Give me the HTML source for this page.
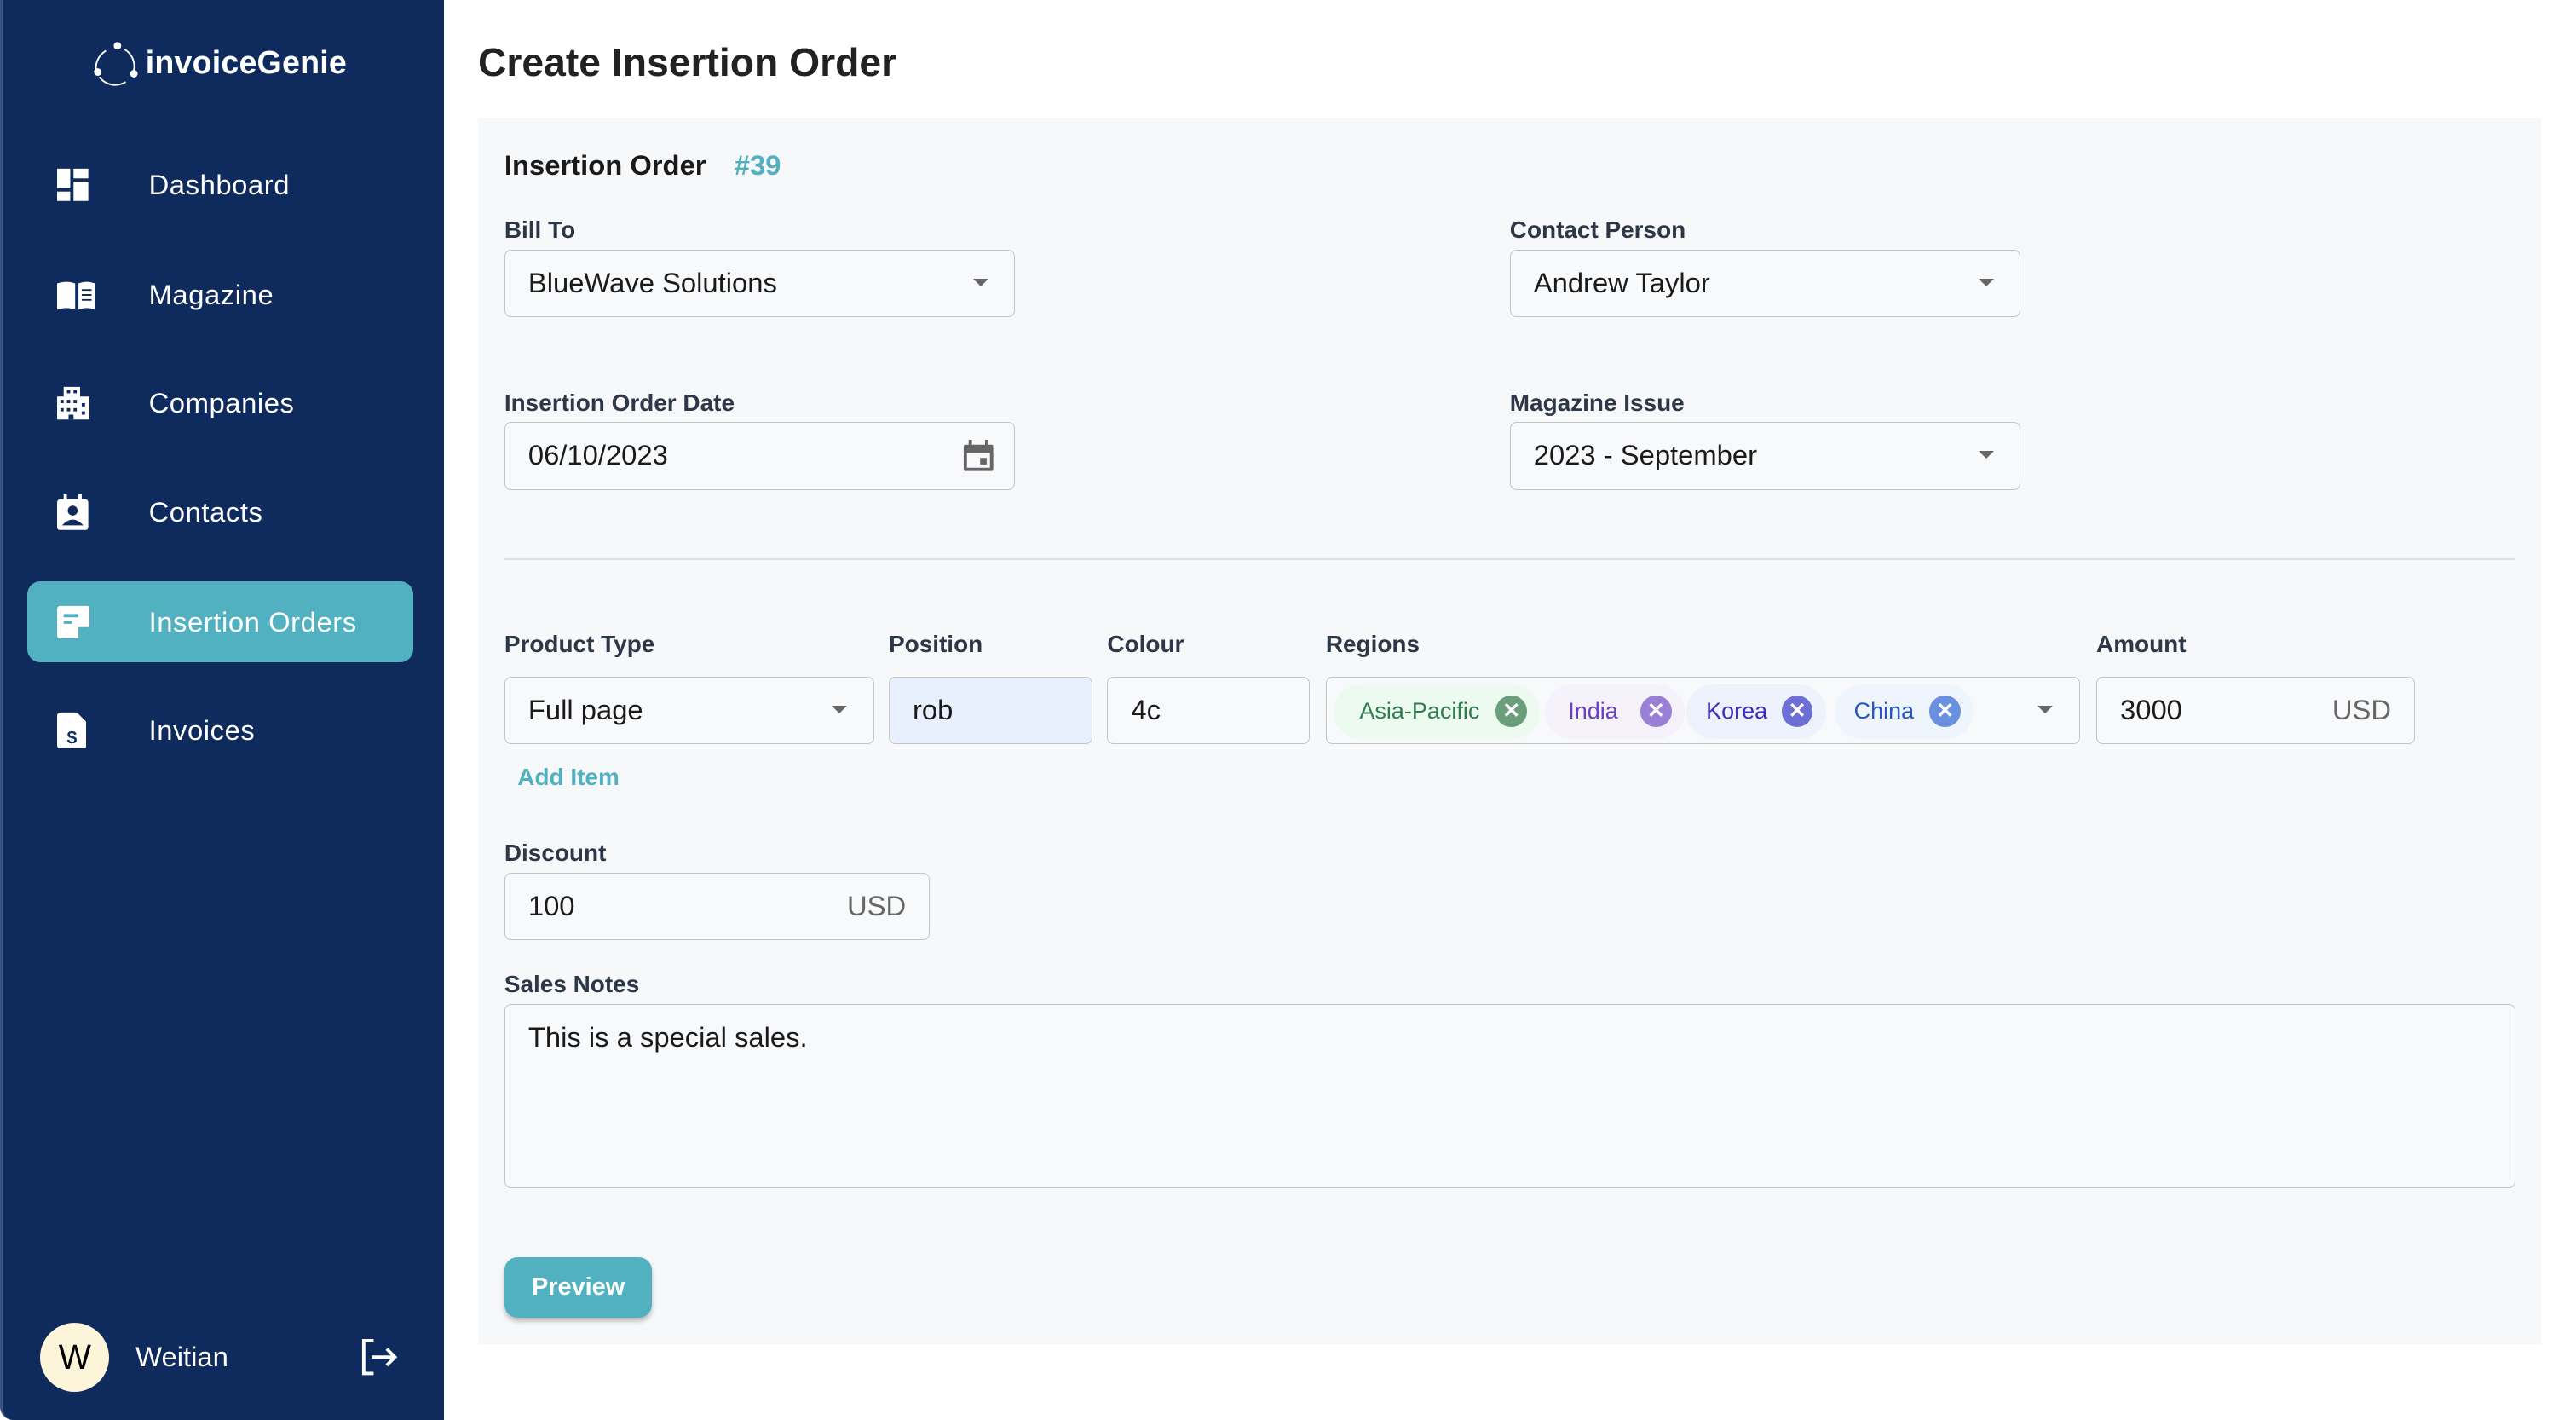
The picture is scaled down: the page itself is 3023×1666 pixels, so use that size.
<!DOCTYPE html>
<html><head><meta charset="utf-8"><style>
html,body{margin:0;padding:0;}
body{width:1568px;height:864px;zoom:1.92793;overflow:hidden;font-family:"Liberation Sans",sans-serif;background:#fff;position:relative;}
.abs{position:absolute;}
.side{left:0;top:0;width:270px;height:864px;background:#0f2a5c;border-left:2px solid #3a5280;box-sizing:border-box;border-radius:0 0 0 8px;}
.nav{position:absolute;left:15px;width:235px;height:49px;border-radius:8px;color:#fff;font-size:17px;}
.nav span{position:absolute;left:74px;top:50%;transform:translateY(-50%);letter-spacing:.3px;}
.nav svg{position:absolute;left:18px;top:50%;transform:translateY(-50%);}
.lbl{position:absolute;font-size:14.5px;font-weight:bold;color:#2d3748;}
.inp{position:absolute;height:41px;border:1px solid #c4c4c4;border-radius:4px;box-sizing:border-box;background:#f8f9fb;font-size:17px;color:#1a1a1a;line-height:39px;padding-left:14px;}
.arr{position:absolute;right:16px;top:17px;width:0;height:0;border-left:5px solid transparent;border-right:5px solid transparent;border-top:5px solid #666;}
.chip{position:absolute;top:4px;height:33px;border-radius:17px;font-size:14px;line-height:33px;padding-left:16px;box-sizing:border-box;}
.chip i{position:absolute;right:8px;top:7px;width:19px;height:19px;border-radius:50%;color:#fff;font-style:normal;font-size:13px;font-weight:bold;line-height:19px;text-align:center;}
.usd{position:absolute;right:14px;top:0;color:#666;}
</style></head><body>
<div class="abs side">
  <svg class="abs" style="left:54px;top:24px" width="30" height="30" viewBox="0 0 30 30"><path d="M9 7 A12 12 0 0 0 3 19" fill="none" stroke="#fff" stroke-width="1"/><path d="M20 6 A12 12 0 0 1 26 19" fill="none" stroke="#fff" stroke-width="1"/><path d="M5 23 A12 12 0 0 0 21 26" fill="none" stroke="#fff" stroke-width="1"/><circle cx="16" cy="4" r="2.3" fill="#fff"/><circle cx="4" cy="20" r="2.3" fill="#fff"/><circle cx="26" cy="21" r="2.3" fill="#fff"/></svg>
  <div class="abs" style="left:87px;top:27px;color:#fff;font-size:19.5px;font-weight:bold;letter-spacing:.1px">invoiceGenie</div>
  <div class="nav" style="top:88px"><svg width="20" height="20" viewBox="0 0 20 20" fill="#fff"><rect x="0" y="0" width="8" height="12"/><rect x="10" y="0" width="9" height="6"/><rect x="0" y="14" width="8" height="6"/><rect x="10" y="8" width="9" height="12"/></svg><span>Dashboard</span></div>
  <div class="nav" style="top:155px"><svg width="24" height="18" viewBox="0 0 24 18" fill="#fff"><path d="M0 2 Q6 0 11 2 V18 Q6 16 0 18Z"/><path d="M13 2 Q18 0 23 2 V18 Q18 16 13 18Z"/><path d="M15 6h6M15 9h6M15 12h6" stroke="#0f2a5c" stroke-width="1"/></svg><span>Magazine</span></div>
  <div class="nav" style="top:221px"><svg width="20" height="20" viewBox="0 0 20 20" fill="#fff"><path d="M4 0h10v6h6v14H0V6h4z"/><g fill="#0f2a5c"><rect x="6" y="2" width="2" height="2"/><rect x="10" y="2" width="2" height="2"/><rect x="2" y="8" width="2" height="2"/><rect x="6" y="8" width="2" height="2"/><rect x="10" y="8" width="2" height="2"/><rect x="15" y="10" width="2" height="2"/><rect x="2" y="13" width="2" height="2"/><rect x="6" y="13" width="2" height="2"/><rect x="10" y="13" width="2" height="2"/><rect x="15" y="15" width="2" height="2"/><rect x="7" y="17" width="3" height="3"/></g></svg><span>Companies</span></div>
  <div class="nav" style="top:287px"><svg width="20" height="22" viewBox="0 0 20 22" fill="#fff"><rect x="0" y="3" width="19" height="19" rx="2"/><rect x="4" y="0" width="2" height="4"/><rect x="13" y="0" width="2" height="4"/><circle cx="9.5" cy="10" r="3" fill="#0f2a5c"/><path d="M3 19 Q9.5 12 16 19Z" fill="#0f2a5c"/></svg><span>Contacts</span></div>
  <div class="nav" style="top:354px;background:#52b1c0"><svg width="20" height="20" viewBox="0 0 20 20" fill="#fff"><path d="M2 0h16a2 2 0 0 1 2 2v11l-7 7H2a2 2 0 0 1-2-2V2a2 2 0 0 1 2-2z"/><path d="M4 6h9M4 10h5" stroke="#52b1c0" stroke-width="2"/><path d="M20 13h-7v7" fill="#52b1c0"/></svg><span>Insertion Orders</span></div>
  <div class="nav" style="top:420px"><svg width="18" height="22" viewBox="0 0 18 22" fill="#fff"><path d="M2 0h10l6 6v14a2 2 0 0 1-2 2H2a2 2 0 0 1-2-2V2a2 2 0 0 1 2-2z"/><text x="9" y="19" font-size="11" font-weight="bold" text-anchor="middle" fill="#0f2a5c" font-family="Liberation Sans">$</text></svg><span>Invoices</span></div>
  <div class="abs" style="left:23px;top:805px;width:42px;height:42px;border-radius:50%;background:#fdf5d9;color:#000;font-size:21px;text-align:center;line-height:42px">W</div>
  <div class="abs" style="left:81px;top:816px;color:#fff;font-size:17px">Weitian</div>
  <svg class="abs" style="left:218px;top:815px" width="24" height="22" viewBox="0 0 24 22" fill="none" stroke="#fff" stroke-width="2"><path d="M8 1H2v20h6"/><path d="M7 11h14M16 6l5 5-5 5"/></svg>
</div>

<div class="abs" style="left:291px;top:24px;font-size:24px;font-weight:bold;color:#222">Create Insertion Order</div>
<div class="abs" style="left:291px;top:72px;width:1256px;height:746px;background:#f7f8fa"></div>

<div class="abs" style="left:307px;top:91px;font-size:17px;font-weight:bold;color:#1a1a1a">Insertion Order</div>
<div class="abs" style="left:447px;top:91px;font-size:17px;font-weight:bold;color:#52b1c0">#39</div>

<div class="lbl" style="left:307px;top:132px">Bill To</div>
<div class="inp" style="left:307px;top:152px;width:311px">BlueWave Solutions<div class="arr"></div></div>
<div class="lbl" style="left:919px;top:132px">Contact Person</div>
<div class="inp" style="left:919px;top:152px;width:311px">Andrew Taylor<div class="arr"></div></div>

<div class="lbl" style="left:307px;top:237px">Insertion Order Date</div>
<div class="inp" style="left:307px;top:257px;width:311px">06/10/2023
<svg style="position:absolute;right:12px;top:10px" width="20" height="20" viewBox="0 0 20 20" fill="#666"><rect x="4" y="0" width="2" height="4"/><rect x="14" y="0" width="2" height="4"/><path d="M2 3h16a1 1 0 0 1 1 1v14a1 1 0 0 1-1 1H2a1 1 0 0 1-1-1V4a1 1 0 0 1 1-1zM3 8v9h14V8z" fill-rule="evenodd"/><rect x="11" y="11" width="4" height="4"/></svg></div>
<div class="lbl" style="left:919px;top:237px">Magazine Issue</div>
<div class="inp" style="left:919px;top:257px;width:311px">2023 - September<div class="arr"></div></div>

<div class="abs" style="left:307px;top:340px;width:1224px;height:1px;background:#ddd"></div>

<div class="lbl" style="left:307px;top:384px">Product Type</div>
<div class="inp" style="left:307px;top:412px;width:225px">Full page<div class="arr"></div></div>
<div class="lbl" style="left:541px;top:384px">Position</div>
<div class="inp" style="left:541px;top:412px;width:124px;background:#e8f0fe">rob</div>
<div class="lbl" style="left:674px;top:384px">Colour</div>
<div class="inp" style="left:674px;top:412px;width:123px">4c</div>
<div class="lbl" style="left:807px;top:384px">Regions</div>
<div class="inp" style="left:807px;top:412px;width:459px;padding:0">
  <div class="chip" style="left:4px;width:126px;background:#edfaef;color:#2e7d4f">Asia-Pacific<i style="background:#6b9e7b">✕</i></div>
  <div class="chip" style="left:133px;width:85px;background:#f6f2fc;color:#6a3fc0;padding-left:14px">India<i style="background:#9a7fd6">✕</i></div>
  <div class="chip" style="left:219px;width:85px;background:#eef2fd;color:#3a2fbf;padding-left:12px">Korea<i style="background:#6e6fd6">✕</i></div>
  <div class="chip" style="left:309px;width:85px;background:#eef5fd;color:#2a55c8;padding-left:12px">China<i style="background:#6a90e0">✕</i></div>
  <div class="arr"></div>
</div>
<div class="lbl" style="left:1276px;top:384px">Amount</div>
<div class="inp" style="left:1276px;top:412px;width:194px">3000<span class="usd">USD</span></div>

<div class="abs" style="left:315px;top:465px;font-size:14.5px;font-weight:bold;color:#52b1c0">Add Item</div>

<div class="lbl" style="left:307px;top:511px">Discount</div>
<div class="inp" style="left:307px;top:531px;width:259px">100<span class="usd">USD</span></div>

<div class="lbl" style="left:307px;top:591px">Sales Notes</div>
<div class="inp" style="left:307px;top:611px;width:1224px;height:112px;line-height:20px;padding-top:10px">This is a special sales.</div>

<div class="abs" style="left:307px;top:765px;width:90px;height:37px;border-radius:8px;background:#52b1c0;color:#fff;font-weight:bold;font-size:15px;text-align:center;line-height:37px;box-shadow:0 2px 3px rgba(0,0,0,.25)">Preview</div>
</body></html>
